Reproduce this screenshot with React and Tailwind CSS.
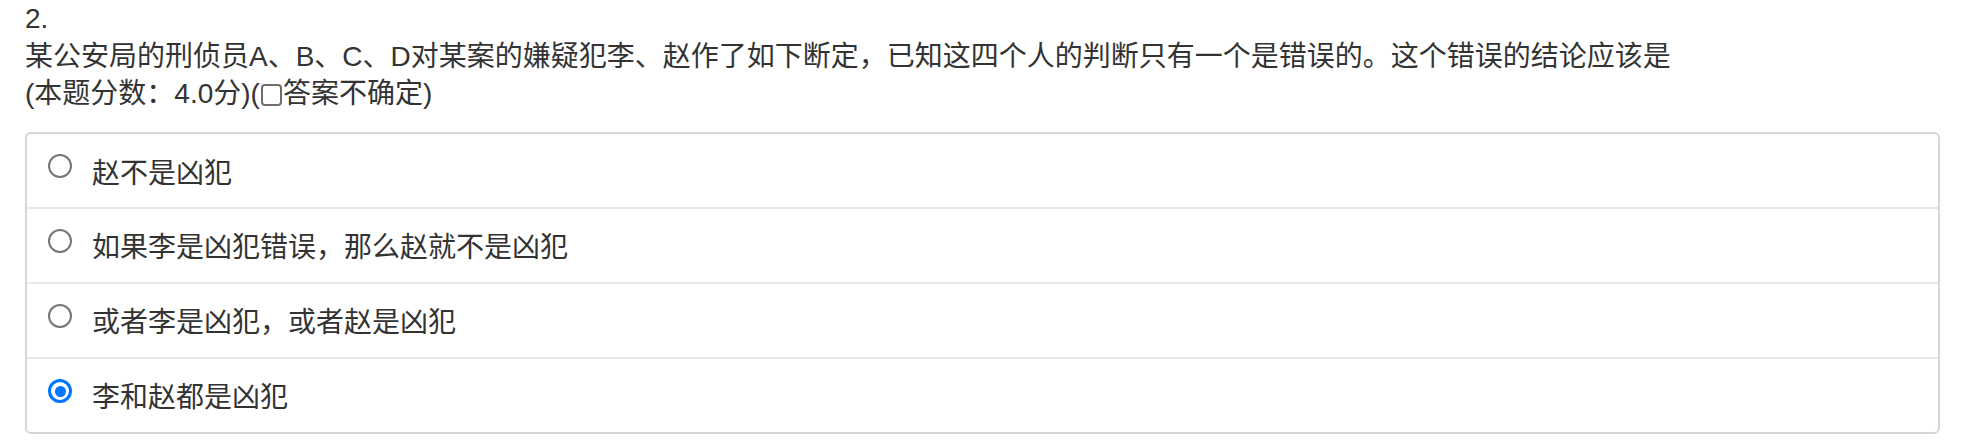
import React from "react";

const options = [
  { text: "赵不是凶犯", checked: false },
  { text: "如果李是凶犯错误，那么赵就不是凶犯", checked: false },
  { text: "或者李是凶犯，或者赵是凶犯", checked: false },
  { text: "李和赵都是凶犯", checked: true },
];

function Radio({ checked }) {
  if (checked) {
    return (
      <span className="mt-[20px] flex h-[24px] w-[24px] shrink-0 items-center justify-center rounded-full border-[3.5px] border-[#0075ff] bg-white">
        <span className="h-[11px] w-[11px] rounded-full bg-[#0075ff]" />
      </span>
    );
  }
  return (
    <span className="mt-[20px] block h-[24px] w-[24px] shrink-0 rounded-full border-[2px] border-[#767676] bg-white" />
  );
}

export default function App() {
  return (
    <div
      className="min-h-[442px] w-full bg-white text-[28px] leading-[37.5px] text-[#333333]"
      style={{ fontFamily: '"Liberation Sans", "Noto Sans CJK SC", sans-serif' }}
    >
      <div className="pl-[25px] pr-[22px]">
        <div>2.</div>
        <div>
          某公安局的刑侦员A、B、C、D对某案的嫌疑犯李、赵作了如下断定，已知这四个人的判断只有一个是错误的。这个错误的结论应该是
        </div>
        <div className="flex items-center">
          <span>(本题分数：4.0分)(</span>
          <span className="mx-[1px] mt-[2px] block h-[22px] w-[21px] shrink-0 rounded-[4px] border-2 border-[#6e6e6e] bg-white" />
          <span>答案不确定)</span>
        </div>
        <div className="mt-[19.5px] overflow-hidden rounded-[6px] border-2 border-[#d6d6d6]">
          {options.map((o, i) => (
            <div
              key={i}
              className={
                "flex items-start gap-[20px] px-[21px] " +
                (i > 0 ? "h-[75px] border-t-2 border-[#e8e8e8]" : "h-[73px]")
              }
            >
              <Radio checked={o.checked} />
              <span className={i > 0 ? "pt-[20px]" : "pt-[21px]"}>{o.text}</span>
            </div>
          ))}
        </div>
      </div>
    </div>
  );
}
